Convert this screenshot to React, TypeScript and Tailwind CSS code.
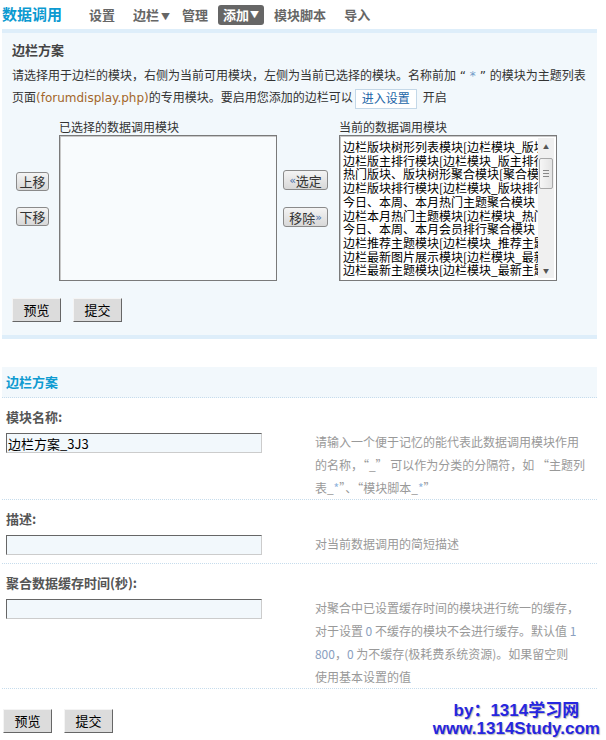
import React from 'react';

const modules = [
  '边栏版块树形列表模块[边栏模块_版块树形列表]',
  '边栏版主排行模块[边栏模块_版主排行]',
  '热门版块、版块树形聚合模块[聚合模块_版块]',
  '边栏版块排行模块[边栏模块_版块排行]',
  '今日、本周、本月热门主题聚合模块',
  '边栏本月热门主题模块[边栏模块_热门主题_本月]',
  '今日、本周、本月会员排行聚合模块',
  '边栏推荐主题模块[边栏模块_推荐主题]',
  '边栏最新图片展示模块[边栏模块_最新图片]',
  '边栏最新主题模块[边栏模块_最新主题]',
];

function SmallButton({ children, className = '' }: { children: React.ReactNode; className?: string }) {
  return (
    <button
      className={`flex items-center justify-center border border-[#8a8a8a] rounded-[3px] bg-gradient-to-b from-[#f4f4f4] to-[#d8d8d8] text-[13px] leading-none text-[#333] ${className}`}
    >
      {children}
    </button>
  );
}

function FlatButton({ children }: { children: React.ReactNode }) {
  return (
    <button className="w-[49px] h-[24px] bg-[#dcdcdc] border border-t-[#f4f4f4] border-l-[#f4f4f4] border-r-[#666] border-b-[#666] text-[13px] text-black">
      {children}
    </button>
  );
}

function Scrollbar() {
  return (
    <div className="w-[16px] shrink-0 h-full bg-[#f0f0f0] flex flex-col items-center">
      <div className="h-[16px] flex items-center justify-center text-[6px] text-[#555]">▲</div>
      <div className="flex-1 w-full px-[1px] pt-[4px]">
        <div className="h-[31px] w-full rounded-[2px] border border-[#a8a8a8] bg-gradient-to-r from-[#f6f6f6] to-[#e4e4e4] flex flex-col items-center justify-center gap-[2px]">
          <div className="w-[6px] h-px bg-[#888]" />
          <div className="w-[6px] h-px bg-[#888]" />
          <div className="w-[6px] h-px bg-[#888]" />
        </div>
      </div>
      <div className="h-[16px] flex items-center justify-center text-[6px] text-[#555]">▼</div>
    </div>
  );
}

function FieldRow({ label, value, help }: { label: React.ReactNode; value?: string; help: React.ReactNode }) {
  return (
    <div className="px-[4px] border-b border-dotted border-[#c6dcec]">
      <div className="pt-[9px] h-[32px] leading-[20px] text-[13px] font-bold text-[#555]">{label}</div>
      <div className="flex items-start">
        <div className="w-[311px] pt-[3px] pb-[8px]">
          <input
            defaultValue={value}
            className="w-[256px] h-[20px] bg-[#f2f8fc] border border-t-[#666] border-l-[#666] border-r-[#ccc] border-b-[#ccc] px-[1px] text-[13px] text-black outline-none"
          />
        </div>
        <div className="w-[280px] whitespace-nowrap text-[12px] leading-[23px] text-[#999]">{help}</div>
      </div>
    </div>
  );
}

export default function App() {
  return (
    <div className="relative w-[606px] h-[740px] overflow-hidden bg-white font-['DejaVu_Sans','Noto_Sans_CJK_SC',sans-serif] text-[12px] text-[#333]">
      {/* Top nav */}
      <div className="h-[29px] flex items-center pl-[2px] font-['Noto_Sans_CJK_SC',sans-serif] font-bold text-[13px] text-[#666]">
        <span className="text-[15px] text-[#0c9ad1]">数据调用</span>
        <span className="ml-[27px]">设置</span>
        <span className="ml-[18px]">
          边栏<span className="ml-[2px] text-[9px]">▼</span>
        </span>
        <span className="ml-[12px]">管理</span>
        <span className="ml-[10px] h-[20px] px-[5px] rounded-[3px] bg-[#666] text-white flex items-center">
          添加<span className="ml-[1px] text-[9px]">▼</span>
        </span>
        <span className="ml-[10px]">模块脚本</span>
        <span className="ml-[18px]">导入</span>
      </div>

      {/* Sidebar scheme panel */}
      <div className="ml-[2px] w-[595px] border-t-[4px] border-b-[4px] border-[#deeefa] bg-[#f2f8fc] px-[10px] pt-[7px] pb-[13px]">
        <div className="leading-[20px] font-bold text-[13px] text-[#444] font-['Noto_Sans_CJK_SC',sans-serif]">边栏方案</div>
        <div className="mt-[5px] leading-[22px]">
          请选择用于边栏的模块，右侧为当前可用模块，左侧为当前已选择的模块。名称前加 “ <span className="text-[#6f9bc8]">*</span> ” 的模块为主题列表
          <br />
          页面<span className="text-[#a3662a]">(forumdisplay.php)</span>的专用模块。要启用您添加的边栏可以
          <span className="inline-block ml-[2px] h-[20px] leading-[18px] px-[6px] bg-white border border-[#c4d8e8] text-[#2366a8] align-middle">
            进入设置
          </span>
          <span className="ml-[6px]">开启</span>
        </div>

        <div className="mt-[11px] flex items-start font-['Noto_Sans_CJK_SC',sans-serif]">
          <div className="w-[47px] pt-[52px] flex flex-col gap-[16px] pl-[4px]">
            <SmallButton className="w-[33px] h-[19px]">上移</SmallButton>
            <SmallButton className="w-[33px] h-[19px]">下移</SmallButton>
          </div>
          <div className="w-[218px]">
            <div className="h-[15px] leading-[14px] text-[12px] text-[#333]">已选择的数据调用模块</div>
            <div className="h-[146px] border border-[#7a7a7a] shadow-[inset_1px_1px_0_#c8c8c8] bg-[#f8fbfd]" />
          </div>
          <div className="w-[62px] pt-[50px] flex flex-col gap-[17px] pl-[6px]">
            <SmallButton className="w-[45px] h-[20px]">
              <span className="text-[11px] text-[#4a6fa8] font-['DejaVu_Sans',sans-serif]">«</span>选定
            </SmallButton>
            <SmallButton className="w-[45px] h-[20px]">
              移除<span className="text-[11px] text-[#4a6fa8] font-['DejaVu_Sans',sans-serif]">»</span>
            </SmallButton>
          </div>
          <div className="w-[218px]">
            <div className="h-[15px] leading-[14px] text-[12px] text-[#333]">当前的数据调用模块</div>
            <div className="h-[146px] border border-[#7a7a7a] shadow-[inset_1px_1px_0_#c8c8c8] bg-white flex p-[2px]">
              <div className="flex-1 min-w-0 overflow-hidden pl-[1px] pt-[2px] text-[12px] leading-[13.7px] text-black">
                {modules.map((m) => (
                  <div key={m} className="whitespace-nowrap">
                    {m}
                  </div>
                ))}
              </div>
              <Scrollbar />
            </div>
          </div>
        </div>

        <div className="mt-[17px] flex gap-[12px] font-['Noto_Sans_CJK_SC',sans-serif]">
          <FlatButton>预览</FlatButton>
          <FlatButton>提交</FlatButton>
        </div>
      </div>

      {/* Form section */}
      <div className="mt-[28px] ml-[2px] w-[595px] font-['Noto_Sans_CJK_SC',sans-serif]">
        <div className="h-[31px] bg-[#f2f8fc] border-b border-dotted border-[#c6dcec] px-[4px] flex items-center text-[13px] font-bold text-[#0e9bd1]">
          边栏方案
        </div>
        <FieldRow
          label="模块名称:"
          value="边栏方案_3J3"
          help={
            <>
              请输入一个便于记忆的能代表此数据调用模块作用
              <br />
              的名称，“_” 可以作为分类的分隔符，如 “主题列
              <br />
              表_<span className="text-[#8fb4dc]">*</span>”、“模块脚本_<span className="text-[#8fb4dc]">*</span>”
            </>
          }
        />
        <FieldRow label="描述:" help="对当前数据调用的简短描述" />
        <FieldRow
          label="聚合数据缓存时间(秒):"
          help={
            <>
              对聚合中已设置缓存时间的模块进行统一的缓存，
              <br />
              对于设置 <span className="text-[#8aa0c0]">0</span> 不缓存的模块不会进行缓存。默认值{' '}
              <span className="text-[#8aa0c0]">1</span>
              <br />
              <span className="text-[#8aa0c0]">800</span>，<span className="text-[#8aa0c0]">0</span> 为不缓存(极耗费系统资源)。如果留空则
              <br />
              使用基本设置的值
            </>
          }
        />
        <div className="mt-[20px] flex gap-[12px] pl-[1px]">
          <FlatButton>预览</FlatButton>
          <FlatButton>提交</FlatButton>
        </div>
      </div>

      {/* Watermark */}
      <div className="absolute right-[6px] bottom-[2px] flex flex-col items-center font-['Liberation_Sans','Noto_Sans_CJK_SC',sans-serif] font-bold text-[17px] leading-[18px] text-[#2626e0] [text-shadow:1px_1px_1px_#bbb]">
        <div>by：1314学习网</div>
        <div>www.1314Study.com</div>
      </div>
    </div>
  );
}
